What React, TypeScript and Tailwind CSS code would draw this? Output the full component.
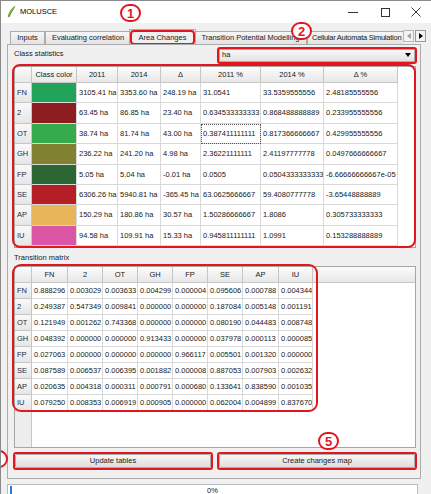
import React from 'react';

const stats = [
  ['FN', 'bg-[#21a45a]', '3105.41 ha', '3353.60 ha', '248.19 ha', '31.0541', '33.5359555556', '2.48185555556'],
  ['2', 'bg-[#8c1d20]', '63.45 ha', '86.85 ha', '23.40 ha', '0.634533333333', '0.868488888889', '0.233955555556'],
  ['OT', 'bg-[#36ab4d]', '38.74 ha', '81.74 ha', '43.00 ha', '0.387411111111', '0.817366666667', '0.429955555556'],
  ['GH', 'bg-[#808231]', '236.22 ha', '241.20 ha', '4.98 ha', '2.36221111111', '2.41197777778', '0.0497666666667'],
  ['FP', 'bg-[#2c6632]', '5.05 ha', '5.04 ha', '-0.01 ha', '0.0505', '0.0504333333333', '-6.66666666667e-05'],
  ['SE', 'bg-[#b51e24]', '6306.26 ha', '5940.81 ha', '-365.45 ha', '63.0625666667', '59.4080777778', '-3.65448888889'],
  ['AP', 'bg-[#e8b55b]', '150.29 ha', '180.86 ha', '30.57 ha', '1.50286666667', '1.8086', '0.305733333333'],
  ['IU', 'bg-[#db56a5]', '94.58 ha', '109.91 ha', '15.33 ha', '0.945811111111', '1.0991', '0.153288888889'],
];

const classes = ['FN', '2', 'OT', 'GH', 'FP', 'SE', 'AP', 'IU'];

const matrix = [
  ['0.888296', '0.003029', '0.003633', '0.004299', '0.000004', '0.095606', '0.000788', '0.004344'],
  ['0.249387', '0.547349', '0.009841', '0.000000', '0.000000', '0.187084', '0.005148', '0.001191'],
  ['0.121949', '0.001262', '0.743368', '0.000000', '0.000000', '0.080190', '0.044483', '0.008748'],
  ['0.048392', '0.000000', '0.000000', '0.913433', '0.000000', '0.037978', '0.000113', '0.000085'],
  ['0.027063', '0.000000', '0.000000', '0.000000', '0.966117', '0.005501', '0.001320', '0.000000'],
  ['0.087589', '0.006537', '0.006395', '0.001882', '0.000008', '0.887053', '0.007903', '0.002632'],
  ['0.020635', '0.004318', '0.000311', '0.000791', '0.000680', '0.133641', '0.838590', '0.001035'],
  ['0.079250', '0.008353', '0.006919', '0.000905', '0.000000', '0.062004', '0.004899', '0.837670'],
];

const headCell =
  'flex items-center justify-center border-r border-b border-[#c6c6c6] bg-linear-to-b from-[#fbfbfb] to-[#e8e8e8] whitespace-nowrap overflow-hidden';
const rowHead =
  'flex items-center pl-[2px] border-r border-b border-[#c6c6c6] bg-linear-to-b from-[#f9f9f9] to-[#e6e6e6] text-[#1c2a44]';
const dataCell = 'flex items-center pl-[2px] border-r border-b border-[#d9d9d9] whitespace-nowrap overflow-hidden';

function Circled({ n, className }: { n?: string; className: string }) {
  return (
    <div
      className={`absolute w-[21px] h-[18px] rounded-full border-2 border-[#e3161e] bg-white text-[#e3161e] font-bold text-[13px] leading-none flex items-center justify-center ${className}`}
    >
      {n}
    </div>
  );
}

function RedBox({ className }: { className: string }) {
  return <span className={`absolute pointer-events-none border-[2.5px] border-[#e3161e] ${className}`} />;
}

const tabs = [
  { label: 'Inputs', cls: 'w-[35px] justify-center' },
  { label: 'Evaluating correlation', cls: 'w-[86px] justify-center' },
  { label: 'Area Changes', cls: 'w-[67px] justify-center', active: true },
  { label: 'Transition Potential Modelling', cls: 'w-[113px] justify-center' },
  { label: 'Cellular Automata Simulation', cls: 'w-[110px] justify-start pl-[4px] tracking-[-0.25px]' },
];

export default function App() {
  return (
    <div className="relative w-[431px] h-[494px] overflow-hidden bg-[#f0f0f0] border-l border-t border-[#8a8a8a] font-['Liberation_Sans',Arial,sans-serif] text-[7.5px] text-[#202020]">
      {/* Title bar */}
      <div className="h-[22px] bg-white flex items-center pl-[6px]">
        <svg width="9" height="12" viewBox="0 0 9 12">
          <path d="M8 0.5 C5 2 2.5 5 1.2 10.5 L2.4 11 C3.5 7 5.5 3.5 8 0.5 Z" fill="#c9d43a" stroke="#4f8a2a" strokeWidth="0.7" />
          <path d="M7 2 L2 10" stroke="#3c7a22" strokeWidth="0.6" />
        </svg>
        <span className="ml-[4px] text-[7.5px] text-black">MOLUSCE</span>
        <div className="ml-auto flex items-center h-full">
          <div className="w-[32px] flex justify-center">
            <div className="w-[10px] h-px bg-[#333]" />
          </div>
          <div className="w-[32px] flex justify-center">
            <div className="w-[9px] h-[9px] border border-[#333]" />
          </div>
          <div className="w-[30px] flex justify-center">
            <svg width="10" height="10" viewBox="0 0 10 10">
              <path d="M0.5 0.5 L9.5 9.5 M9.5 0.5 L0.5 9.5" stroke="#333" strokeWidth="1" />
            </svg>
          </div>
        </div>
      </div>

      {/* Tabs */}
      <div className="flex items-end h-[16px] mt-[5px] pl-[9px]">
        <div className="flex items-end w-[393px] h-full overflow-hidden">
          {tabs.map((t) =>
            t.active ? (
              <div
                key={t.label}
                className={`relative z-10 ${t.cls} shrink-0 h-[16px] -mx-[2px] mb-[-1px] bg-[#f0f0f0] border border-b-0 border-[#acacac] flex items-center whitespace-nowrap`}
              >
                {t.label}
                <RedBox className="inset-0 rounded-[4px]" />
              </div>
            ) : (
              <div
                key={t.label}
                className={`${t.cls} shrink-0 h-[13px] border border-b-0 border-[#acacac] bg-linear-to-b from-[#f6f6f6] to-[#e3e3e3] flex items-center whitespace-nowrap overflow-hidden`}
              >
                {t.label}
              </div>
            )
          )}
        </div>
        <div className="flex gap-[1px] mb-[2px]">
          <div className="w-[11px] h-[12px] border border-[#b8b8b8] bg-[#f3f3f3] flex items-center justify-center">
            <span className="w-0 h-0 border-y-[3px] border-y-transparent border-r-[4px] border-r-[#a0a0a0]" />
          </div>
          <div className="w-[11px] h-[12px] border border-[#9a9a9a] bg-[#f3f3f3] flex items-center justify-center">
            <span className="w-0 h-0 border-y-[3px] border-y-transparent border-l-[4px] border-l-black" />
          </div>
        </div>
      </div>

      {/* Tab pane */}
      <div className="ml-[6px] w-[414px] h-[435px] border border-[#acacac] bg-[#f0f0f0] flex flex-col">
        <div className="h-[18px] flex items-center justify-between pl-[6px] pr-[5px]">
          <span>Class statistics</span>
          <div className="relative w-[196px] h-[13px] mt-[2px] border border-[#acacac] bg-linear-to-b from-[#f7f7f7] to-[#e4e4e4] flex items-center pl-[2px]">
            <span>ha</span>
            <span className="ml-auto mr-[3px] w-0 h-0 border-x-[3px] border-x-transparent border-t-[4px] border-t-black" />
            <RedBox className="-left-[3px] -right-[3px] -top-[3px] -bottom-[3px] rounded-[3px]" />
          </div>
        </div>

        {/* Class statistics table */}
        <div className="relative ml-[6px] mt-[3px] w-[402px] h-[182px] border border-[#a6a6a6] bg-white">
          <div className="grid grid-cols-[17px_45px_41px_43px_40px_60px_63px_74px] grid-rows-[16px_repeat(8,20.375px)]">
            {['', 'Class color', '2011', '2014', 'Δ', '2011 %', '2014 %', 'Δ %'].map((h, i) => (
              <div key={i} className={headCell}>
                {h}
              </div>
            ))}
            {stats.map((r) => (
              <React.Fragment key={r[0]}>
                <div className={rowHead}>{r[0]}</div>
                <div className={`${r[1]} border-r border-b border-[#d9d9d9]`} />
                {r.slice(2).map((v, j) => (
                  <div
                    key={j}
                    className={`${dataCell} ${
                      r[0] === 'OT' && j === 3 ? 'outline-1 outline-dotted outline-[#555] -outline-offset-1' : ''
                    }`}
                  >
                    {v}
                  </div>
                ))}
              </React.Fragment>
            ))}
          </div>
          <RedBox className="-left-[3px] -right-[1px] -top-[3px] -bottom-[1px] rounded-[8px]" />
        </div>

        <div className="h-[18px] flex items-center pl-[6px] pt-[2px]">Transition matrix</div>

        {/* Transition matrix */}
        <div className="relative ml-[6px] w-[402px] h-[182px] border border-[#a6a6a6] bg-white flex flex-col">
          <div className="flex h-[16px] bg-linear-to-b from-[#fbfbfb] to-[#e8e8e8] border-b border-[#c6c6c6]">
            <div className="w-[17px] border-r border-[#c6c6c6]" />
            <div className="grid grid-cols-[36px_35px_35px_35px_35px_35px_36px_34px]">
              {classes.map((c) => (
                <div key={c} className="flex items-center justify-center border-r border-[#c6c6c6]">
                  {c}
                </div>
              ))}
            </div>
          </div>
          <div className="flex flex-1">
            <div className="w-[17px] flex flex-col bg-[#ededed] border-r border-[#c6c6c6]">
              {classes.map((c) => (
                <div key={c} className="h-[16px] flex items-center pl-[2px] border-b border-[#c6c6c6] bg-linear-to-b from-[#f9f9f9] to-[#e6e6e6] text-[#1c2a44]">
                  {c}
                </div>
              ))}
            </div>
            <div className="grid grid-cols-[36px_35px_35px_35px_35px_35px_36px_34px] auto-rows-[16px] content-start">
              {matrix.map((row, i) =>
                row.map((v, j) => (
                  <div key={`${i}-${j}`} className={dataCell}>
                    {v}
                  </div>
                ))
              )}
            </div>
          </div>
          <RedBox className="-left-[3px] -top-[3px] w-[306px] h-[148px] rounded-[9px]" />
        </div>

        {/* Buttons */}
        <div className="flex justify-between pl-[7px] pr-[5px] mt-[6px]">
          <div className="relative w-[196px] h-[14px] border border-[#adadad] rounded-[2px] bg-linear-to-b from-[#f6f6f6] to-[#dedede] flex items-center justify-center">
            Update tables
            <RedBox className="-left-[3px] -right-[3px] -top-[3px] -bottom-[3px] rounded-[3px]" />
          </div>
          <div className="relative w-[196px] h-[14px] border border-[#adadad] rounded-[2px] bg-linear-to-b from-[#f6f6f6] to-[#dedede] flex items-center justify-center">
            Create changes map
            <RedBox className="-left-[3px] -right-[3px] -top-[3px] -bottom-[3px] rounded-[3px]" />
          </div>
        </div>
      </div>

      {/* Progress bar */}
      <div className="relative ml-[6px] mt-[5px] w-[411px] h-[14px] border border-[#bcbcbc] bg-white flex items-center justify-center">
        <div className="absolute left-[2px] top-[1px] bottom-[1px] w-[2px] bg-[#2a7bd6]" />
        <span>0%</span>
      </div>

      {/* Annotations */}
      <Circled n="1" className="left-[119px] top-[3px]" />
      <Circled n="2" className="left-[290px] top-[21px]" />
      <Circled n="5" className="left-[317px] top-[431px]" />
      <Circled className="-left-[14px] top-[449px]" />
    </div>
  );
}
